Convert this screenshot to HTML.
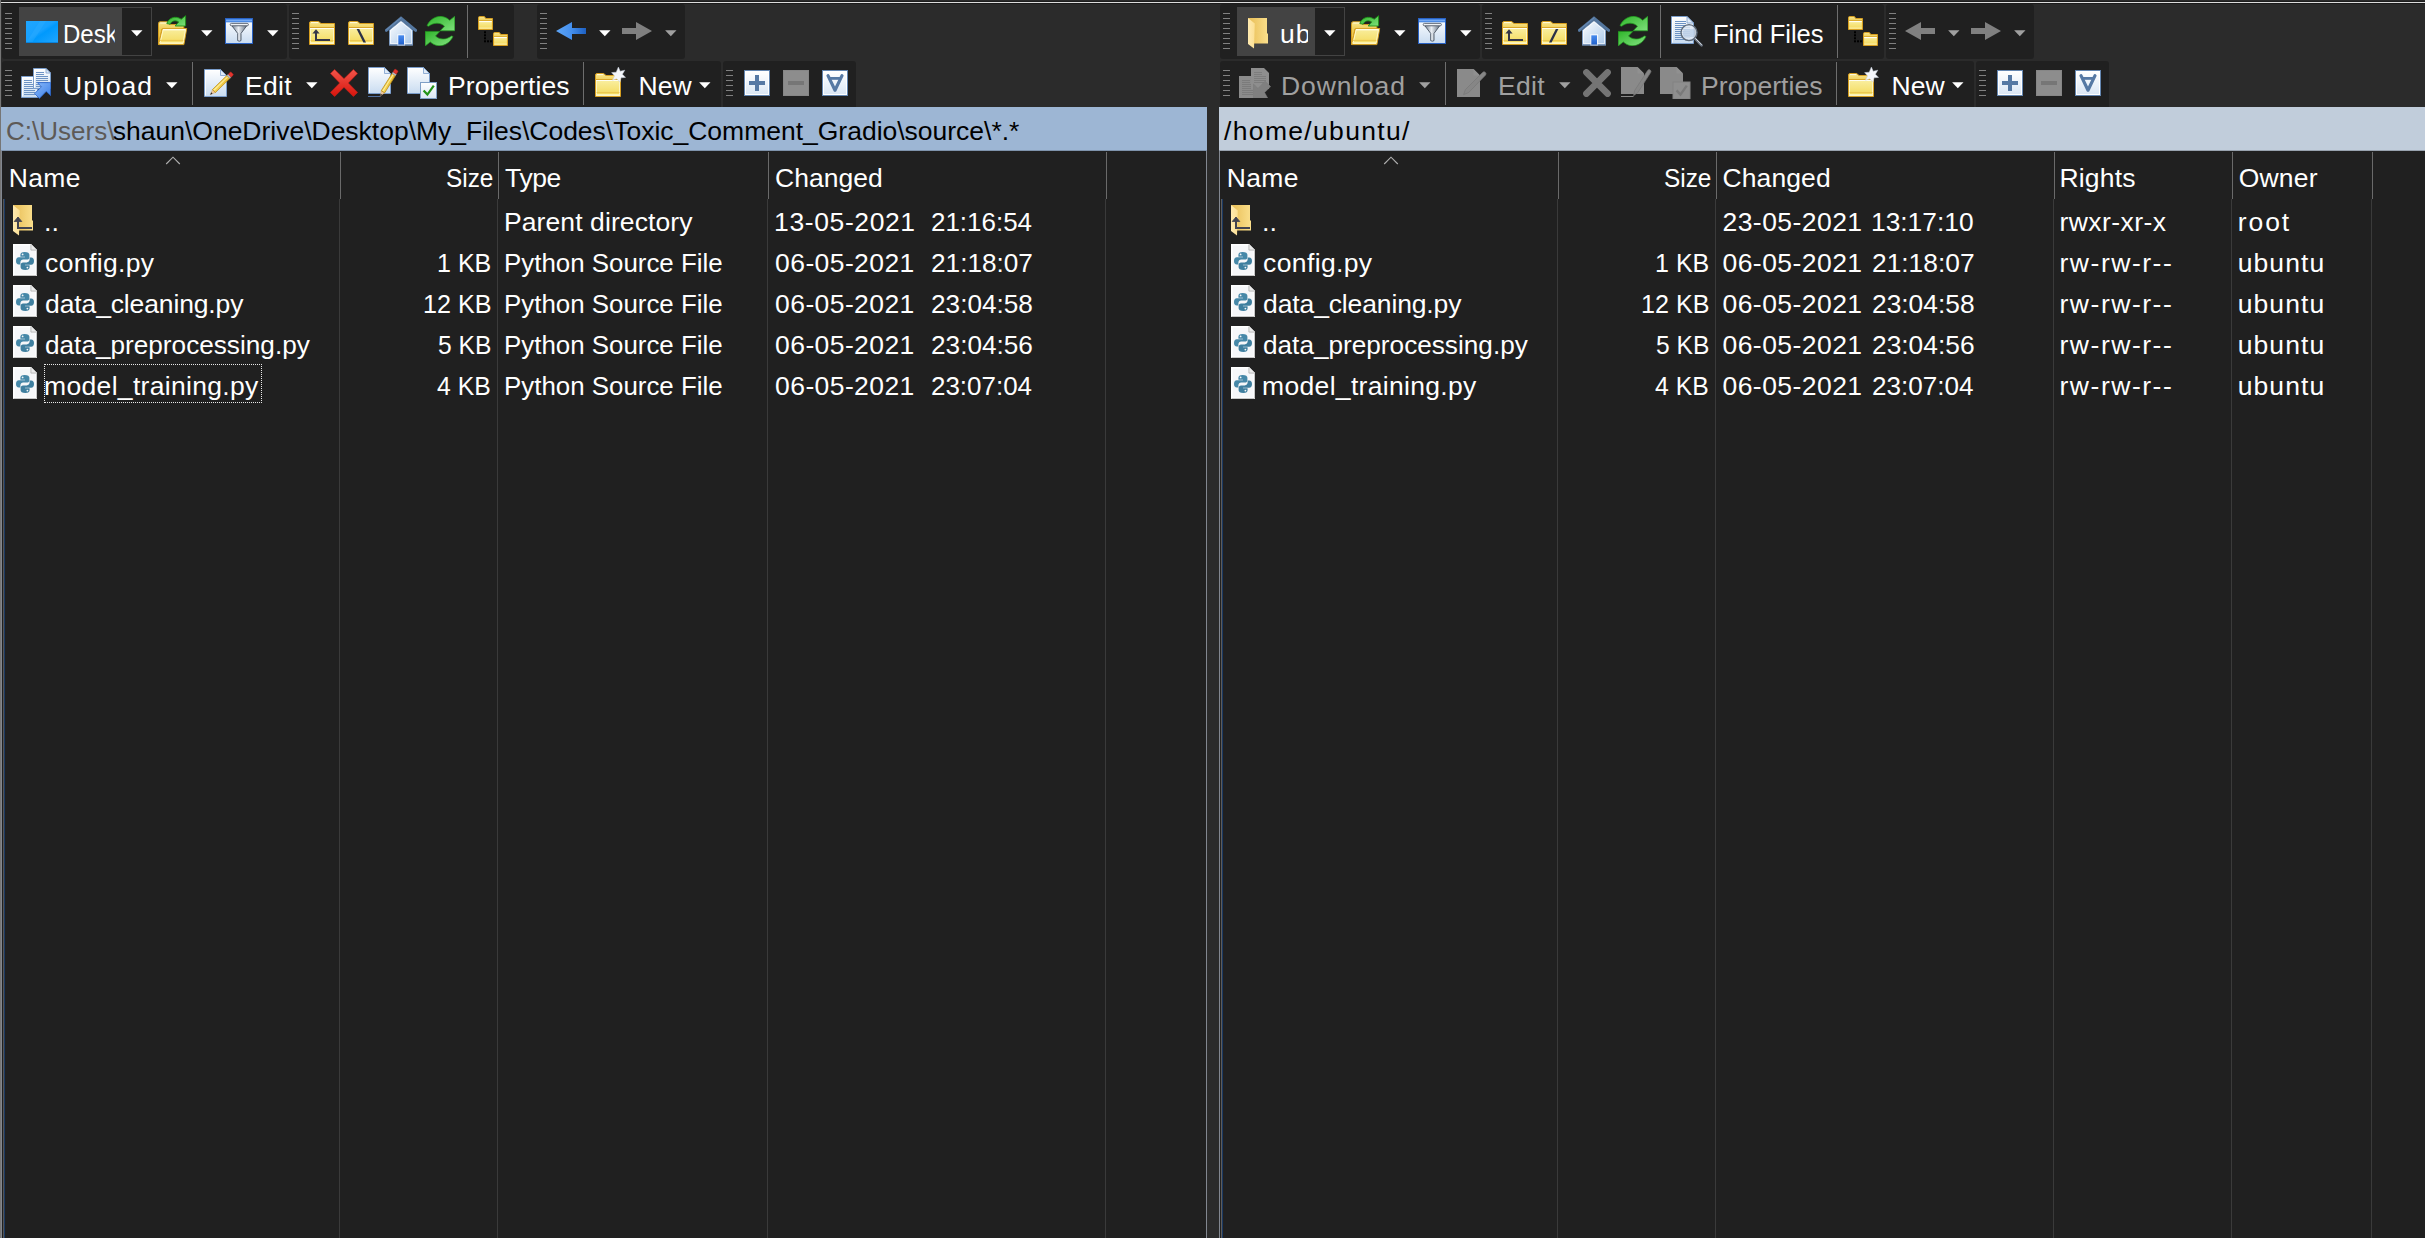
<!DOCTYPE html>
<html><head><meta charset="utf-8"><title>WinSCP</title>
<style>
html,body{margin:0;padding:0;}
body{width:2425px;height:1238px;overflow:hidden;background:#2b2b2b;font-family:"Liberation Sans",sans-serif;}
#r{position:relative;width:2425px;height:1238px;overflow:hidden;}
#r>div,#r>svg,#r>span{position:absolute;display:block;}
.t{white-space:pre;line-height:32px;height:32px;transform-origin:0 50%;}
</style></head>
<body>
<svg width="0" height="0" style="position:absolute"><defs>
<linearGradient id="gFold" x1="0" y1="0" x2="0" y2="1"><stop offset="0" stop-color="#f9ee9f"/><stop offset="1" stop-color="#f4da5a"/></linearGradient>
<linearGradient id="gFoldB" x1="0" y1="0" x2="0" y2="1"><stop offset="0" stop-color="#f8e894"/><stop offset="0.3" stop-color="#f0cf58"/><stop offset="1" stop-color="#ecc040"/></linearGradient>
<linearGradient id="gPage" x1="0" y1="0" x2="0" y2="1"><stop offset="0" stop-color="#ffffff"/><stop offset="1" stop-color="#c9dcf1"/></linearGradient>
<linearGradient id="gDesk" x1="0" y1="0" x2="1" y2="1"><stop offset="0" stop-color="#1fa6ff"/><stop offset="0.45" stop-color="#17a1ff"/><stop offset="0.55" stop-color="#0099fd"/><stop offset="1" stop-color="#22a6ff"/></linearGradient>
<linearGradient id="gVf" x1="0" y1="0" x2="1" y2="0"><stop offset="0" stop-color="#e8bd55"/><stop offset="1" stop-color="#fadf8c"/></linearGradient>
<linearGradient id="gVfF" x1="0" y1="0" x2="1" y2="0"><stop offset="0" stop-color="#ffeab0"/><stop offset="1" stop-color="#fbdf93"/></linearGradient>
<linearGradient id="gGreen" x1="0" y1="0" x2="1" y2="1"><stop offset="0" stop-color="#2fb52a"/><stop offset="1" stop-color="#7fe07c"/></linearGradient>
<linearGradient id="gGreen2" x1="1" y1="1" x2="0" y2="0"><stop offset="0" stop-color="#2fb52a"/><stop offset="1" stop-color="#84e382"/></linearGradient>
<linearGradient id="gBack" x1="0" y1="0" x2="1" y2="0"><stop offset="0" stop-color="#5fa6f7"/><stop offset="0.5" stop-color="#4590ee"/><stop offset="1" stop-color="#1d60c2"/></linearGradient>
<linearGradient id="gFun" x1="0" y1="0" x2="1" y2="0"><stop offset="0" stop-color="#6d7b8c"/><stop offset="0.45" stop-color="#e9eef4"/><stop offset="1" stop-color="#5d6b7c"/></linearGradient>
<linearGradient id="gHome" x1="0" y1="0" x2="1" y2="1"><stop offset="0" stop-color="#ffffff"/><stop offset="1" stop-color="#a9c8ea"/></linearGradient>
<linearGradient id="gDoor" x1="0" y1="0" x2="0" y2="1"><stop offset="0" stop-color="#4a8df0"/><stop offset="1" stop-color="#1f5fc9"/></linearGradient>
<linearGradient id="gRed" x1="0" y1="0" x2="0" y2="1"><stop offset="0" stop-color="#f2554a"/><stop offset="1" stop-color="#d8140c"/></linearGradient>
<linearGradient id="gBtn" x1="0" y1="0" x2="0" y2="1"><stop offset="0" stop-color="#ffffff"/><stop offset="1" stop-color="#dbe7f5"/></linearGradient>
<linearGradient id="gArr" x1="0" y1="0" x2="1" y2="1"><stop offset="0" stop-color="#8ab9fb"/><stop offset="1" stop-color="#3b7fe6"/></linearGradient>
<linearGradient id="gPen" x1="0" y1="0" x2="1" y2="1"><stop offset="0" stop-color="#fbe36a"/><stop offset="1" stop-color="#e9b92c"/></linearGradient>
</defs></svg>
<div id="r">
<div style="left:0px;top:1px;width:2425px;height:1px;background:#1e1e1e;"></div>
<div style="left:0px;top:2px;width:2425px;height:1px;background:#dcdcdc;"></div>
<div style="left:0px;top:3px;width:2425px;height:1px;background:#1b1b1b;"></div>
<div style="left:2px;top:4px;width:285px;height:55px;background:#202020;border-radius:3px;"></div>
<div style="left:289px;top:4px;width:225px;height:55px;background:#202020;border-radius:3px;"></div>
<div style="left:537px;top:4px;width:148px;height:55px;background:#202020;border-radius:3px;"></div>
<div style="left:2px;top:61px;width:719px;height:49px;background:#202020;border-radius:3px;"></div>
<div style="left:723px;top:61px;width:133px;height:49px;background:#202020;border-radius:3px;"></div>
<div style="left:1220px;top:4px;width:260px;height:55px;background:#202020;border-radius:3px;"></div>
<div style="left:1482px;top:4px;width:402px;height:55px;background:#202020;border-radius:3px;"></div>
<div style="left:1886px;top:4px;width:148px;height:55px;background:#202020;border-radius:3px;"></div>
<div style="left:1220px;top:61px;width:754px;height:49px;background:#202020;border-radius:3px;"></div>
<div style="left:1976px;top:61px;width:133px;height:49px;background:#202020;border-radius:3px;"></div>
<div style="left:5px;top:13px;width:7px;height:1px;background:#818181;"></div>
<div style="left:5px;top:18px;width:7px;height:1px;background:#818181;"></div>
<div style="left:5px;top:23px;width:7px;height:1px;background:#818181;"></div>
<div style="left:5px;top:28px;width:7px;height:1px;background:#818181;"></div>
<div style="left:5px;top:33px;width:7px;height:1px;background:#818181;"></div>
<div style="left:5px;top:38px;width:7px;height:1px;background:#818181;"></div>
<div style="left:5px;top:43px;width:7px;height:1px;background:#818181;"></div>
<div style="left:5px;top:48px;width:7px;height:1px;background:#818181;"></div>
<div style="left:19px;top:7px;width:133px;height:49px;background:#434343;"></div>
<div style="left:122px;top:8px;width:29px;height:47px;background:#202020;"></div>
<svg style="left:130.6px;top:30px" width="12" height="7" viewBox="0 0 12 7"><path d="M0.1 0.2 H11.5 L5.8 6.2 Z" fill="#fff"/></svg>
<svg style="left:158px;top:15px" width="30" height="31" viewBox="0 0 30 31"><path d="M0.5 29.5 V8.5 Q0.5 6.8 2 6.8 H9.5 L11.8 9.6 H25.8 V14 H4 Z" fill="url(#gFoldB)" stroke="#d69e20"/><path d="M2.2 8 H8.8" stroke="#fffbe0" stroke-width="1"/><path d="M4.3 13.6 H28.7 L25.9 29.6 H0.6 Z" fill="url(#gFold)" stroke="#d69e20"/><path d="M5.2 14.8 H27.4 L25 28.4 H2 Z" fill="none" stroke="#fff8c8" stroke-width="1"/><path d="M5 14.7 H27.6" stroke="#fffef0" stroke-width="1"/><path d="M1.8 25.4 H25.4" stroke="#ecc850" stroke-width="1"/><path d="M1.6 27.4 H25.1" stroke="#fdf3b4" stroke-width="1"/><path d="M8.8 8.6 C10.6 2.9 17.4 0.2 23.2 4.2 L27.6 0.7 V11 H17.2 L20.7 6.9 C17 4.7 13.2 6.2 12.2 9.2 Z" fill="url(#gGreen)" stroke="#1d9019" stroke-width="0.9" stroke-linejoin="round"/></svg>
<svg style="left:200.8px;top:30px" width="12" height="7" viewBox="0 0 12 7"><path d="M0.1 0.2 H11.5 L5.8 6.2 Z" fill="#fff"/></svg>
<svg style="left:225px;top:18px" width="28" height="26" viewBox="0 0 28 26"><rect x="0.5" y="0.5" width="27" height="25" fill="url(#gPage)" stroke="#2962c4"/><rect x="1" y="1" width="26" height="3" fill="#4d8ce6"/><rect x="1" y="2" width="26" height="1" fill="#76a9f2"/><rect x="1" y="4" width="26" height="1" fill="#b9d0f0"/><path d="M6.6 7.4 H22 L16 15.4 V22.6 Q14.4 23.8 12.7 22.6 V15.4 Z" fill="url(#gFun)" stroke="#4a5563" stroke-width="0.9" stroke-linejoin="round"/><rect x="5.2" y="5.4" width="18.2" height="2.4" rx="1.2" fill="#eef2f7" stroke="#56606e" stroke-width="0.9"/></svg>
<svg style="left:266.8px;top:30px" width="12" height="7" viewBox="0 0 12 7"><path d="M0.1 0.2 H11.5 L5.8 6.2 Z" fill="#fff"/></svg>
<div style="left:292px;top:13px;width:7px;height:1px;background:#818181;"></div>
<div style="left:292px;top:18px;width:7px;height:1px;background:#818181;"></div>
<div style="left:292px;top:23px;width:7px;height:1px;background:#818181;"></div>
<div style="left:292px;top:28px;width:7px;height:1px;background:#818181;"></div>
<div style="left:292px;top:33px;width:7px;height:1px;background:#818181;"></div>
<div style="left:292px;top:38px;width:7px;height:1px;background:#818181;"></div>
<div style="left:292px;top:43px;width:7px;height:1px;background:#818181;"></div>
<div style="left:292px;top:48px;width:7px;height:1px;background:#818181;"></div>
<svg style="left:309px;top:21px" width="26" height="24" viewBox="0 0 26 24"><path d="M0.5 23.5 V2 Q0.5 0.5 2 0.5 H9.6 L12 2.5 H25.5 V23.5 Z" fill="url(#gFoldB)" stroke="#d69e20"/><path d="M2 1.6 H9" stroke="#fffbe0" stroke-width="1"/><rect x="1" y="6" width="24" height="1" fill="#d9a62a"/><rect x="1.5" y="7.5" width="23" height="15" fill="url(#gFold)" stroke="#fdf6c4" stroke-width="1"/><rect x="1" y="7" width="24" height="1" fill="#fffef0"/><path d="M1.6 19.5 H24.4" stroke="#ecc850" stroke-width="1"/><path d="M1.6 21.5 H24.4" stroke="#fdf3b4" stroke-width="1"/><path d="M7 10 V19 H21" fill="none" stroke="#353648" stroke-width="2"/><path d="M3.4 12.6 L7 8.2 L10.6 12.6 Z" fill="#353648"/></svg>
<svg style="left:26px;top:21px" width="32" height="22" viewBox="0 0 32 22"><rect width="32" height="22" fill="url(#gDesk)"/><path d="M0 22 L14 0 H20 L6 22 Z" fill="#35b0ff" opacity="0.35"/><rect y="21" width="32" height="1" fill="#0a84dc"/></svg>
<span class="t" id="t1" style="left:63.10px;top:17.82px;font-size:26.5px;color:#fff;transform:scaleX(0.9074);width:57.20px;overflow:hidden;">Desk</span>
<svg style="left:348px;top:21px" width="26" height="24" viewBox="0 0 26 24"><path d="M0.5 23.5 V2 Q0.5 0.5 2 0.5 H9.6 L12 2.5 H25.5 V23.5 Z" fill="url(#gFoldB)" stroke="#d69e20"/><path d="M2 1.6 H9" stroke="#fffbe0" stroke-width="1"/><rect x="1" y="6" width="24" height="1" fill="#d9a62a"/><rect x="1.5" y="7.5" width="23" height="15" fill="url(#gFold)" stroke="#fdf6c4" stroke-width="1"/><rect x="1" y="7" width="24" height="1" fill="#fffef0"/><path d="M1.6 19.5 H24.4" stroke="#ecc850" stroke-width="1"/><path d="M1.6 21.5 H24.4" stroke="#fdf3b4" stroke-width="1"/><path d="M8.6 8 H11.2 L18 21.4 H15.4 Z" fill="#2b3148"/></svg>
<svg style="left:385px;top:16px" width="32" height="30" viewBox="0 0 32 30"><path d="M4.5 14 L16 4.6 L27.5 14 V28.8 H4.5 Z" fill="url(#gHome)" stroke="#7e9cc2" stroke-width="1"/><path d="M5.5 14.6 L16 6 L26.5 14.6 V27.6 H5.5 Z" fill="none" stroke="#ffffff" stroke-width="0.9" opacity="0.75"/><rect x="12.8" y="18.8" width="6.8" height="10.4" fill="url(#gDoor)" stroke="#ffffff" stroke-width="1"/><path d="M1.3 14.3 L16 2.3 L30.7 14.3" fill="none" stroke="#54779f" stroke-width="3" stroke-linecap="round" stroke-linejoin="miter"/><path d="M1.6 13.6 L16 1.9" fill="none" stroke="#7294bd" stroke-width="1" stroke-linecap="round" opacity="0.8"/><rect x="4" y="28.6" width="24" height="1" fill="#6f8db5"/></svg>
<svg style="left:425px;top:16px" width="30" height="30" viewBox="0 0 30 30"><path d="M2 9.6 C5 3.2 11.6 -0.4 17 0.5 C20 1 22.6 2.3 24.7 4.3 L29.8 0.2 V14.8 H15.2 L19.5 10.2 C15.6 6.2 8.6 6.2 3.6 10.3 Z" fill="url(#gGreen)" stroke="#1f9a1c" stroke-width="0.7" stroke-linejoin="round"/><path d="M2 9.6 C5 3.2 11.6 -0.4 17 0.5 C20 1 22.6 2.3 24.7 4.3 L29.8 0.2 V14.8 H15.2 L19.5 10.2 C15.6 6.2 8.6 6.2 3.6 10.3 Z" transform="rotate(180 15 15.1)" fill="url(#gGreen2)" stroke="#1f9a1c" stroke-width="0.7" stroke-linejoin="round"/></svg>
<div style="left:467px;top:5px;width:1px;height:53px;background:#6e6e6e;"></div>
<svg style="left:478px;top:16px" width="30" height="30" viewBox="0 0 30 30"><g transform="translate(0 0)"><path d="M0.5 13.5 V1.8 Q0.5 0.5 1.8 0.5 H6.3 L7.8 2.5 H14.5 V13.5 Z" fill="url(#gFoldB)" stroke="#d69e20"/><rect x="1" y="4.2" width="13" height="0.9" fill="#d9a62a"/><rect x="1.2" y="5" width="12.6" height="7.8" fill="url(#gFold)"/><rect x="1.2" y="5" width="12.6" height="1.1" fill="#fffef2"/><rect x="1.2" y="11.6" width="12.6" height="1" fill="#fdf3b4"/></g><g transform="translate(15 16)"><path d="M0.5 13.5 V1.8 Q0.5 0.5 1.8 0.5 H6.3 L7.8 2.5 H14.5 V13.5 Z" fill="url(#gFoldB)" stroke="#d69e20"/><rect x="1" y="4.2" width="13" height="0.9" fill="#d9a62a"/><rect x="1.2" y="5" width="12.6" height="7.8" fill="url(#gFold)"/><rect x="1.2" y="5" width="12.6" height="1.1" fill="#fffef2"/><rect x="1.2" y="11.6" width="12.6" height="1" fill="#fdf3b4"/></g><rect x="6" y="15.3" width="2" height="2" fill="#000"/><rect x="6" y="18.3" width="2" height="2" fill="#000"/><rect x="6" y="21.3" width="2" height="2" fill="#000"/><rect x="6" y="24.3" width="2" height="2" fill="#000"/><rect x="9" y="24.3" width="2" height="2" fill="#000"/><rect x="12" y="24.3" width="2" height="2" fill="#000"/></svg>
<div style="left:540px;top:13px;width:7px;height:1px;background:#818181;"></div>
<div style="left:540px;top:18px;width:7px;height:1px;background:#818181;"></div>
<div style="left:540px;top:23px;width:7px;height:1px;background:#818181;"></div>
<div style="left:540px;top:28px;width:7px;height:1px;background:#818181;"></div>
<div style="left:540px;top:33px;width:7px;height:1px;background:#818181;"></div>
<div style="left:540px;top:38px;width:7px;height:1px;background:#818181;"></div>
<div style="left:540px;top:43px;width:7px;height:1px;background:#818181;"></div>
<div style="left:540px;top:48px;width:7px;height:1px;background:#818181;"></div>
<svg style="left:556px;top:22px" width="30" height="18" viewBox="0 0 30 18"><path d="M0 9 L16 0 V6 H30 V12 H16 V18 Z" fill="url(#gBack)"/></svg>
<svg style="left:598.7px;top:30px" width="12" height="7" viewBox="0 0 12 7"><path d="M0.1 0.2 H11.5 L5.8 6.2 Z" fill="#fff"/></svg>
<svg style="left:622px;top:22px" width="30" height="18" viewBox="0 0 30 18"><path d="M30 9 L14 0 V6 H0 V12 H14 V18 Z" fill="#808080"/></svg>
<svg style="left:664.6px;top:30px" width="12" height="7" viewBox="0 0 12 7"><path d="M0.1 0.2 H11.5 L5.8 6.2 Z" fill="#a0a0a0"/></svg>
<div style="left:1223px;top:13px;width:7px;height:1px;background:#818181;"></div>
<div style="left:1223px;top:18px;width:7px;height:1px;background:#818181;"></div>
<div style="left:1223px;top:23px;width:7px;height:1px;background:#818181;"></div>
<div style="left:1223px;top:28px;width:7px;height:1px;background:#818181;"></div>
<div style="left:1223px;top:33px;width:7px;height:1px;background:#818181;"></div>
<div style="left:1223px;top:38px;width:7px;height:1px;background:#818181;"></div>
<div style="left:1223px;top:43px;width:7px;height:1px;background:#818181;"></div>
<div style="left:1223px;top:48px;width:7px;height:1px;background:#818181;"></div>
<div style="left:1237px;top:7px;width:108px;height:49px;background:#434343;"></div>
<div style="left:1315px;top:8px;width:29px;height:47px;background:#202020;"></div>
<svg style="left:1323.6px;top:30px" width="12" height="7" viewBox="0 0 12 7"><path d="M0.1 0.2 H11.5 L5.8 6.2 Z" fill="#fff"/></svg>
<svg style="left:1351px;top:15px" width="30" height="31" viewBox="0 0 30 31"><path d="M0.5 29.5 V8.5 Q0.5 6.8 2 6.8 H9.5 L11.8 9.6 H25.8 V14 H4 Z" fill="url(#gFoldB)" stroke="#d69e20"/><path d="M2.2 8 H8.8" stroke="#fffbe0" stroke-width="1"/><path d="M4.3 13.6 H28.7 L25.9 29.6 H0.6 Z" fill="url(#gFold)" stroke="#d69e20"/><path d="M5.2 14.8 H27.4 L25 28.4 H2 Z" fill="none" stroke="#fff8c8" stroke-width="1"/><path d="M5 14.7 H27.6" stroke="#fffef0" stroke-width="1"/><path d="M1.8 25.4 H25.4" stroke="#ecc850" stroke-width="1"/><path d="M1.6 27.4 H25.1" stroke="#fdf3b4" stroke-width="1"/><path d="M8.8 8.6 C10.6 2.9 17.4 0.2 23.2 4.2 L27.6 0.7 V11 H17.2 L20.7 6.9 C17 4.7 13.2 6.2 12.2 9.2 Z" fill="url(#gGreen)" stroke="#1d9019" stroke-width="0.9" stroke-linejoin="round"/></svg>
<svg style="left:1393.8px;top:30px" width="12" height="7" viewBox="0 0 12 7"><path d="M0.1 0.2 H11.5 L5.8 6.2 Z" fill="#fff"/></svg>
<svg style="left:1418px;top:18px" width="28" height="26" viewBox="0 0 28 26"><rect x="0.5" y="0.5" width="27" height="25" fill="url(#gPage)" stroke="#2962c4"/><rect x="1" y="1" width="26" height="3" fill="#4d8ce6"/><rect x="1" y="2" width="26" height="1" fill="#76a9f2"/><rect x="1" y="4" width="26" height="1" fill="#b9d0f0"/><path d="M6.6 7.4 H22 L16 15.4 V22.6 Q14.4 23.8 12.7 22.6 V15.4 Z" fill="url(#gFun)" stroke="#4a5563" stroke-width="0.9" stroke-linejoin="round"/><rect x="5.2" y="5.4" width="18.2" height="2.4" rx="1.2" fill="#eef2f7" stroke="#56606e" stroke-width="0.9"/></svg>
<svg style="left:1459.8px;top:30px" width="12" height="7" viewBox="0 0 12 7"><path d="M0.1 0.2 H11.5 L5.8 6.2 Z" fill="#fff"/></svg>
<div style="left:1485px;top:13px;width:7px;height:1px;background:#818181;"></div>
<div style="left:1485px;top:18px;width:7px;height:1px;background:#818181;"></div>
<div style="left:1485px;top:23px;width:7px;height:1px;background:#818181;"></div>
<div style="left:1485px;top:28px;width:7px;height:1px;background:#818181;"></div>
<div style="left:1485px;top:33px;width:7px;height:1px;background:#818181;"></div>
<div style="left:1485px;top:38px;width:7px;height:1px;background:#818181;"></div>
<div style="left:1485px;top:43px;width:7px;height:1px;background:#818181;"></div>
<div style="left:1485px;top:48px;width:7px;height:1px;background:#818181;"></div>
<svg style="left:1502px;top:21px" width="26" height="24" viewBox="0 0 26 24"><path d="M0.5 23.5 V2 Q0.5 0.5 2 0.5 H9.6 L12 2.5 H25.5 V23.5 Z" fill="url(#gFoldB)" stroke="#d69e20"/><path d="M2 1.6 H9" stroke="#fffbe0" stroke-width="1"/><rect x="1" y="6" width="24" height="1" fill="#d9a62a"/><rect x="1.5" y="7.5" width="23" height="15" fill="url(#gFold)" stroke="#fdf6c4" stroke-width="1"/><rect x="1" y="7" width="24" height="1" fill="#fffef0"/><path d="M1.6 19.5 H24.4" stroke="#ecc850" stroke-width="1"/><path d="M1.6 21.5 H24.4" stroke="#fdf3b4" stroke-width="1"/><path d="M7 10 V19 H21" fill="none" stroke="#353648" stroke-width="2"/><path d="M3.4 12.6 L7 8.2 L10.6 12.6 Z" fill="#353648"/></svg>
<svg style="left:1248px;top:17.5px" width="20" height="31" viewBox="0 0 20 31"><path d="M0 0 H19 V15 L20 16 V25.5 H5 Z" fill="url(#gVf)"/><path d="M0 0 L6.8 5.6 L6 30.5 L0 26 Z" fill="url(#gVfF)"/></svg>
<span class="t" id="t2" style="left:1280.10px;top:17.82px;font-size:26.5px;color:#fff;letter-spacing:0.923px;width:27.90px;overflow:hidden;">ubuntu</span>
<svg style="left:1541px;top:21px" width="26" height="24" viewBox="0 0 26 24"><path d="M0.5 23.5 V2 Q0.5 0.5 2 0.5 H9.6 L12 2.5 H25.5 V23.5 Z" fill="url(#gFoldB)" stroke="#d69e20"/><path d="M2 1.6 H9" stroke="#fffbe0" stroke-width="1"/><rect x="1" y="6" width="24" height="1" fill="#d9a62a"/><rect x="1.5" y="7.5" width="23" height="15" fill="url(#gFold)" stroke="#fdf6c4" stroke-width="1"/><rect x="1" y="7" width="24" height="1" fill="#fffef0"/><path d="M1.6 19.5 H24.4" stroke="#ecc850" stroke-width="1"/><path d="M1.6 21.5 H24.4" stroke="#fdf3b4" stroke-width="1"/><path d="M17.4 8 H14.8 L8 21.4 H10.6 Z" fill="#2b3148"/></svg>
<svg style="left:1578px;top:16px" width="32" height="30" viewBox="0 0 32 30"><path d="M4.5 14 L16 4.6 L27.5 14 V28.8 H4.5 Z" fill="url(#gHome)" stroke="#7e9cc2" stroke-width="1"/><path d="M5.5 14.6 L16 6 L26.5 14.6 V27.6 H5.5 Z" fill="none" stroke="#ffffff" stroke-width="0.9" opacity="0.75"/><rect x="12.8" y="18.8" width="6.8" height="10.4" fill="url(#gDoor)" stroke="#ffffff" stroke-width="1"/><path d="M1.3 14.3 L16 2.3 L30.7 14.3" fill="none" stroke="#54779f" stroke-width="3" stroke-linecap="round" stroke-linejoin="miter"/><path d="M1.6 13.6 L16 1.9" fill="none" stroke="#7294bd" stroke-width="1" stroke-linecap="round" opacity="0.8"/><rect x="4" y="28.6" width="24" height="1" fill="#6f8db5"/></svg>
<svg style="left:1618px;top:16px" width="30" height="30" viewBox="0 0 30 30"><path d="M2 9.6 C5 3.2 11.6 -0.4 17 0.5 C20 1 22.6 2.3 24.7 4.3 L29.8 0.2 V14.8 H15.2 L19.5 10.2 C15.6 6.2 8.6 6.2 3.6 10.3 Z" fill="url(#gGreen)" stroke="#1f9a1c" stroke-width="0.7" stroke-linejoin="round"/><path d="M2 9.6 C5 3.2 11.6 -0.4 17 0.5 C20 1 22.6 2.3 24.7 4.3 L29.8 0.2 V14.8 H15.2 L19.5 10.2 C15.6 6.2 8.6 6.2 3.6 10.3 Z" transform="rotate(180 15 15.1)" fill="url(#gGreen2)" stroke="#1f9a1c" stroke-width="0.7" stroke-linejoin="round"/></svg>
<div style="left:1660px;top:5px;width:1px;height:53px;background:#6e6e6e;"></div>
<svg style="left:1671px;top:15px" width="32" height="32" viewBox="0 0 32 32"><path d="M0.5 1.5 H16 L22.5 8 V28.5 H0.5 Z" fill="url(#gPage)" stroke="#7a9dcb" stroke-width="1"/><path d="M1.5 27.5 V2.5 H15.5" fill="none" stroke="#ffffff" stroke-width="1" opacity="0.9"/><path d="M16 1.5 V8 H22.5 Z" fill="#dfeaf6" stroke="#7a9dcb" stroke-width="0.8"/><rect x="4" y="6" width="11" height="1" fill="#6d93c4"/><rect x="4" y="8" width="11" height="1" fill="#6d93c4"/><rect x="4" y="10" width="15" height="1" fill="#6d93c4"/><rect x="4" y="12" width="15" height="1" fill="#6d93c4"/><rect x="4" y="14" width="15" height="1" fill="#6d93c4"/><rect x="4" y="16" width="15" height="1" fill="#6d93c4"/><rect x="4" y="18" width="15" height="1" fill="#6d93c4"/><rect x="4" y="20" width="15" height="1" fill="#6d93c4"/><rect x="4" y="22" width="15" height="1" fill="#6d93c4"/><rect x="4" y="24" width="15" height="1" fill="#6d93c4"/><circle cx="18" cy="17.6" r="8" fill="#dfe9f5" fill-opacity="0.85" stroke="#5f6b7a" stroke-width="1.4"/><path d="M12.5 15 H23.5 M12 17 H24 M12 19 H24 M12.8 21 H23" stroke="#aac2e0" stroke-width="1"/><path d="M24 23.6 L30.6 30.4" stroke="#6a7380" stroke-width="2.6" stroke-linecap="round"/><path d="M24.6 23.6 L30.4 29.6" stroke="#e8edf3" stroke-width="0.9" stroke-linecap="round"/></svg>
<span class="t" id="t3" style="left:1713.10px;top:17.82px;font-size:26.5px;color:#fff;transform:scaleX(0.9621);">Find Files</span>
<div style="left:1837px;top:5px;width:1px;height:53px;background:#6e6e6e;"></div>
<svg style="left:1848px;top:16px" width="30" height="30" viewBox="0 0 30 30"><g transform="translate(0 0)"><path d="M0.5 13.5 V1.8 Q0.5 0.5 1.8 0.5 H6.3 L7.8 2.5 H14.5 V13.5 Z" fill="url(#gFoldB)" stroke="#d69e20"/><rect x="1" y="4.2" width="13" height="0.9" fill="#d9a62a"/><rect x="1.2" y="5" width="12.6" height="7.8" fill="url(#gFold)"/><rect x="1.2" y="5" width="12.6" height="1.1" fill="#fffef2"/><rect x="1.2" y="11.6" width="12.6" height="1" fill="#fdf3b4"/></g><g transform="translate(15 16)"><path d="M0.5 13.5 V1.8 Q0.5 0.5 1.8 0.5 H6.3 L7.8 2.5 H14.5 V13.5 Z" fill="url(#gFoldB)" stroke="#d69e20"/><rect x="1" y="4.2" width="13" height="0.9" fill="#d9a62a"/><rect x="1.2" y="5" width="12.6" height="7.8" fill="url(#gFold)"/><rect x="1.2" y="5" width="12.6" height="1.1" fill="#fffef2"/><rect x="1.2" y="11.6" width="12.6" height="1" fill="#fdf3b4"/></g><rect x="6" y="15.3" width="2" height="2" fill="#000"/><rect x="6" y="18.3" width="2" height="2" fill="#000"/><rect x="6" y="21.3" width="2" height="2" fill="#000"/><rect x="6" y="24.3" width="2" height="2" fill="#000"/><rect x="9" y="24.3" width="2" height="2" fill="#000"/><rect x="12" y="24.3" width="2" height="2" fill="#000"/></svg>
<div style="left:1889px;top:13px;width:7px;height:1px;background:#818181;"></div>
<div style="left:1889px;top:18px;width:7px;height:1px;background:#818181;"></div>
<div style="left:1889px;top:23px;width:7px;height:1px;background:#818181;"></div>
<div style="left:1889px;top:28px;width:7px;height:1px;background:#818181;"></div>
<div style="left:1889px;top:33px;width:7px;height:1px;background:#818181;"></div>
<div style="left:1889px;top:38px;width:7px;height:1px;background:#818181;"></div>
<div style="left:1889px;top:43px;width:7px;height:1px;background:#818181;"></div>
<div style="left:1889px;top:48px;width:7px;height:1px;background:#818181;"></div>
<svg style="left:1905px;top:22px" width="30" height="18" viewBox="0 0 30 18"><path d="M0 9 L16 0 V6 H30 V12 H16 V18 Z" fill="#808080"/></svg>
<svg style="left:1947.7px;top:30px" width="12" height="7" viewBox="0 0 12 7"><path d="M0.1 0.2 H11.5 L5.8 6.2 Z" fill="#a0a0a0"/></svg>
<svg style="left:1971px;top:22px" width="30" height="18" viewBox="0 0 30 18"><path d="M30 9 L14 0 V6 H0 V12 H14 V18 Z" fill="#808080"/></svg>
<svg style="left:2013.6px;top:30px" width="12" height="7" viewBox="0 0 12 7"><path d="M0.1 0.2 H11.5 L5.8 6.2 Z" fill="#a0a0a0"/></svg>
<div style="left:5px;top:70px;width:7px;height:1px;background:#818181;"></div>
<div style="left:5px;top:75px;width:7px;height:1px;background:#818181;"></div>
<div style="left:5px;top:80px;width:7px;height:1px;background:#818181;"></div>
<div style="left:5px;top:85px;width:7px;height:1px;background:#818181;"></div>
<div style="left:5px;top:90px;width:7px;height:1px;background:#818181;"></div>
<div style="left:5px;top:95px;width:7px;height:1px;background:#818181;"></div>
<svg style="left:21px;top:68px" width="30" height="31" viewBox="0 0 30 31"><path d="M0.5 8.5 H16.99 L16.5 8.01 V29.5 H0.5 Z" fill="url(#gPage)" stroke="#7a9dcb" stroke-width="1"/><path d="M1.5 28.5 V9.5 H16.49" fill="none" stroke="#ffffff" stroke-width="1" opacity="0.9"/><path d="M16.99 8.5 V8.01 H16.5 Z" fill="#dfeaf6" stroke="#7a9dcb" stroke-width="0.8"/><rect x="3" y="12" width="8" height="1" fill="#6d93c4"/><rect x="3" y="14" width="8" height="1" fill="#6d93c4"/><rect x="3" y="16" width="11" height="1" fill="#6d93c4"/><rect x="3" y="18" width="11" height="1" fill="#6d93c4"/><rect x="3" y="20" width="11" height="1" fill="#6d93c4"/><rect x="3" y="22" width="11" height="1" fill="#6d93c4"/><rect x="3" y="24" width="11" height="1" fill="#6d93c4"/><rect x="3" y="26" width="11" height="1" fill="#6d93c4"/><path d="M12.5 0.5 H25 L29.5 5 V20.5 H12.5 Z" fill="url(#gPage)" stroke="#7a9dcb" stroke-width="1"/><path d="M13.5 19.5 V1.5 H24.5" fill="none" stroke="#ffffff" stroke-width="1" opacity="0.9"/><path d="M25 0.5 V5 H29.5 Z" fill="#dfeaf6" stroke="#7a9dcb" stroke-width="0.8"/><rect x="15" y="4" width="8" height="1" fill="#6d93c4"/><rect x="15" y="6" width="8" height="1" fill="#6d93c4"/><rect x="15" y="8" width="12" height="1" fill="#6d93c4"/><rect x="15" y="10" width="12" height="1" fill="#6d93c4"/><rect x="15" y="12" width="12" height="1" fill="#6d93c4"/><rect x="15" y="14" width="12" height="1" fill="#6d93c4"/><rect x="15" y="16" width="12" height="1" fill="#6d93c4"/><rect x="15" y="18" width="12" height="1" fill="#6d93c4"/><path d="M29.6 14.6 V27.6 L25.2 23.4 L18.4 30.4 L13.6 25.6 L20.4 18.8 L16.4 14.6 Z" fill="url(#gArr)" stroke="#2a63c8" stroke-width="0.8" stroke-linejoin="round"/></svg>
<span class="t" id="t4" style="left:63.10px;top:69.82px;font-size:26.5px;color:#fff;letter-spacing:0.976px;">Upload</span>
<svg style="left:165.8px;top:82px" width="12" height="7" viewBox="0 0 12 7"><path d="M0.1 0.2 H11.5 L5.8 6.2 Z" fill="#fff"/></svg>
<div style="left:192px;top:62px;width:1px;height:43px;background:#6e6e6e;"></div>
<svg style="left:204px;top:69px" width="30" height="28" viewBox="0 0 30 28"><path d="M0.5 0.5 H16.5 L22.5 6.5 V27.5 H0.5 Z" fill="url(#gPage)" stroke="#7a9dcb" stroke-width="1"/><path d="M1.5 26.5 V1.5 H16.0" fill="none" stroke="#ffffff" stroke-width="1" opacity="0.9"/><path d="M16.5 0.5 V6.5 H22.5 Z" fill="#dfeaf6" stroke="#7a9dcb" stroke-width="0.8"/><g transform="translate(6.2 25.7) rotate(-44.34)"><path d="M0 0 L5.4 -2.1 V2.1 Z" fill="#efc89a" stroke="#c9a070" stroke-width="0.4"/><path d="M0 0 L2.4 -0.95 V0.95 Z" fill="#2a2a2a"/><rect x="5.2" y="-2.1" width="20.36" height="4.2" fill="url(#gPen)" stroke="#b98a14" stroke-width="0.7"/><rect x="6" y="-0.95" width="18.76" height="0.9" fill="#fff7b8" opacity="0.85"/><rect x="25.36" y="-2.1" width="2" height="4.2" fill="#b4bcc6" stroke="#8a929c" stroke-width="0.3"/><rect x="27.16" y="-2.1" width="3.6" height="4.2" rx="0.8" fill="#e2352e" stroke="#c02620" stroke-width="0.4"/></g></svg>
<span class="t" id="t5" style="left:245.10px;top:69.82px;font-size:26.5px;color:#fff;letter-spacing:0.282px;">Edit</span>
<svg style="left:305.9px;top:82px" width="12" height="7" viewBox="0 0 12 7"><path d="M0.1 0.2 H11.5 L5.8 6.2 Z" fill="#fff"/></svg>
<svg style="left:330px;top:69px" width="28" height="28" viewBox="0 0 28 28"><path d="M4.6 0.5 L14 9.7 L23.4 0.5 L27.5 4.6 L18.3 14 L27.5 23.4 L23.4 27.5 L14 18.3 L4.6 27.5 L0.5 23.4 L9.7 14 L0.5 4.6 Z" fill="url(#gRed)" stroke="#c8211a" stroke-width="0.7" stroke-linejoin="round"/></svg>
<svg style="left:368px;top:67px" width="31" height="31" viewBox="0 0 31 31"><path d="M0.5 0.5 H16.5 L22.5 6.5 V26.5 H0.5 Z" fill="url(#gPage)" stroke="#7a9dcb" stroke-width="1"/><path d="M1.5 25.5 V1.5 H16.0" fill="none" stroke="#ffffff" stroke-width="1" opacity="0.9"/><path d="M16.5 0.5 V6.5 H22.5 Z" fill="#dfeaf6" stroke="#7a9dcb" stroke-width="0.8"/><rect x="0" y="29" width="12.5" height="1" fill="#4f6fa0"/><g transform="translate(12.2 29.2) rotate(-57.96)"><path d="M0 0 L5.4 -2.0 V2.0 Z" fill="#efc89a" stroke="#c9a070" stroke-width="0.4"/><path d="M0 0 L2.4 -0.90 V0.90 Z" fill="#2a2a2a"/><rect x="5.2" y="-2.0" width="20.51" height="4.0" fill="url(#gPen)" stroke="#b98a14" stroke-width="0.7"/><rect x="6" y="-0.90" width="18.91" height="0.9" fill="#fff7b8" opacity="0.85"/><rect x="25.51" y="-2.0" width="2" height="4.0" fill="#b4bcc6" stroke="#8a929c" stroke-width="0.3"/><rect x="27.31" y="-2.0" width="3.6" height="4.0" rx="0.8" fill="#e2352e" stroke="#c02620" stroke-width="0.4"/></g></svg>
<svg style="left:407px;top:67px" width="31" height="32" viewBox="0 0 31 32"><path d="M0.5 0.5 H16.5 L22.5 6.5 V26.5 H0.5 Z" fill="url(#gPage)" stroke="#7a9dcb" stroke-width="1"/><path d="M1.5 25.5 V1.5 H16.0" fill="none" stroke="#ffffff" stroke-width="1" opacity="0.9"/><path d="M16.5 0.5 V6.5 H22.5 Z" fill="#dfeaf6" stroke="#7a9dcb" stroke-width="0.8"/><rect x="13.5" y="15.5" width="16" height="16" fill="url(#gBtn)" stroke="#7f9fc6"/><path d="M16.6 23.4 L20.4 27.6 L26.8 18.6" fill="none" stroke="#239318" stroke-width="2.2"/></svg>
<span class="t" id="t6" style="left:448.10px;top:69.82px;font-size:26.5px;color:#fff;letter-spacing:0.082px;">Properties</span>
<div style="left:583px;top:62px;width:1px;height:43px;background:#6e6e6e;"></div>
<svg style="left:595px;top:67px" width="31" height="31" viewBox="0 0 31 31"><g transform="translate(0 6)"><path d="M0.5 23.5 V2 Q0.5 0.5 2 0.5 H8.6 L11 2.5 H25.5 V23.5 Z" fill="url(#gFoldB)" stroke="#d69e20"/><path d="M2 1.6 H8" stroke="#fffbe0" stroke-width="1"/><rect x="1" y="6" width="24" height="1" fill="#d9a62a"/><rect x="1.5" y="7.5" width="23" height="15" fill="url(#gFold)" stroke="#fdf6c4" stroke-width="1"/><rect x="1" y="7" width="24" height="1" fill="#fffef0"/><path d="M1.6 19.5 H24.4" stroke="#ecc850" stroke-width="1"/><path d="M1.6 21.5 H24.4" stroke="#fdf3b4" stroke-width="1"/></g><path d="M23.4 0 L25.2 4.2 L29.8 3.2 L27.4 7.2 L30.6 10.4 L26 10.8 L25 15.2 L21.8 11.8 L17.4 13.2 L19.6 9 L16.6 5.6 L21.2 5.2 Z" fill="#f4f6fa" stroke="#c5ccd8" stroke-width="0.5"/></svg>
<span class="t" id="t7" style="left:638.50px;top:69.82px;font-size:26.5px;color:#fff;letter-spacing:0.085px;">New</span>
<svg style="left:698.8px;top:82px" width="12" height="7" viewBox="0 0 12 7"><path d="M0.1 0.2 H11.5 L5.8 6.2 Z" fill="#fff"/></svg>
<div style="left:726px;top:70px;width:7px;height:1px;background:#818181;"></div>
<div style="left:726px;top:75px;width:7px;height:1px;background:#818181;"></div>
<div style="left:726px;top:80px;width:7px;height:1px;background:#818181;"></div>
<div style="left:726px;top:85px;width:7px;height:1px;background:#818181;"></div>
<div style="left:726px;top:90px;width:7px;height:1px;background:#818181;"></div>
<div style="left:726px;top:95px;width:7px;height:1px;background:#818181;"></div>
<svg style="left:744px;top:70px" width="26" height="26" viewBox="0 0 26 26"><rect x="0.5" y="0.5" width="25" height="25" fill="#ffffff" stroke="#6486b0"/><rect x="2" y="2" width="22" height="22" fill="url(#gBtn)"/><path d="M13 5 V21 M5 13 H21" stroke="#5679a4" stroke-width="4"/></svg>
<svg style="left:783px;top:70px" width="26" height="26" viewBox="0 0 26 26"><rect width="26" height="26" fill="#8d8d8d"/><rect x="0.5" y="0.5" width="25" height="25" fill="none" stroke="#868686"/><path d="M5 13 H21" stroke="#767676" stroke-width="4"/></svg>
<svg style="left:822px;top:70px" width="26" height="26" viewBox="0 0 26 26"><rect x="0.5" y="0.5" width="25" height="25" fill="#ffffff" stroke="#6486b0"/><rect x="2" y="2" width="22" height="22" fill="url(#gBtn)"/><path d="M6 5.6 L13 20.2 L20 5.6" fill="none" stroke="#5679a4" stroke-width="3.2" stroke-linecap="round" stroke-linejoin="round"/><path d="M7.6 8.4 H18.4" stroke="#5679a4" stroke-width="2.8"/></svg>
<div style="left:1223px;top:70px;width:7px;height:1px;background:#818181;"></div>
<div style="left:1223px;top:75px;width:7px;height:1px;background:#818181;"></div>
<div style="left:1223px;top:80px;width:7px;height:1px;background:#818181;"></div>
<div style="left:1223px;top:85px;width:7px;height:1px;background:#818181;"></div>
<div style="left:1223px;top:90px;width:7px;height:1px;background:#818181;"></div>
<div style="left:1223px;top:95px;width:7px;height:1px;background:#818181;"></div>
<svg style="left:1239px;top:68px" width="32" height="30" viewBox="0 0 32 30"><rect x="0" y="8" width="17" height="22" fill="#8b8b8b"/><rect x="3" y="12" width="8" height="1" fill="#7b7b7b"/><rect x="3" y="14" width="8" height="1" fill="#7b7b7b"/><rect x="3" y="16" width="11" height="1" fill="#7b7b7b"/><rect x="3" y="18" width="11" height="1" fill="#7b7b7b"/><rect x="3" y="20" width="11" height="1" fill="#7b7b7b"/><rect x="3" y="22" width="11" height="1" fill="#7b7b7b"/><rect x="3" y="24" width="11" height="1" fill="#7b7b7b"/><rect x="3" y="26" width="11" height="1" fill="#7b7b7b"/><path d="M12 0 H25 L30 5 V21 H12 Z" fill="#8e8e8e"/><rect x="15" y="4" width="8" height="1" fill="#7d7d7d"/><rect x="15" y="6" width="8" height="1" fill="#7d7d7d"/><rect x="15" y="8" width="12" height="1" fill="#7d7d7d"/><rect x="15" y="10" width="12" height="1" fill="#7d7d7d"/><rect x="15" y="12" width="12" height="1" fill="#7d7d7d"/><rect x="15" y="14" width="12" height="1" fill="#7d7d7d"/><path d="M14.5 16 L19 20.4 L26 13.2 L31.6 18.6 L25.6 24.6 L28.6 30 H14.5 Z" fill="#808080" stroke="#7a7a7a" stroke-width="0.6"/></svg>
<span class="t" id="t8" style="left:1281.10px;top:69.82px;font-size:26.5px;color:#a0a0a0;letter-spacing:0.854px;">Download</span>
<svg style="left:1418.8px;top:82px" width="12" height="7" viewBox="0 0 12 7"><path d="M0.1 0.2 H11.5 L5.8 6.2 Z" fill="#a0a0a0"/></svg>
<div style="left:1445px;top:62px;width:1px;height:43px;background:#6e6e6e;"></div>
<svg style="left:1457px;top:69px" width="30" height="28" viewBox="0 0 30 28"><path d="M0 0 H16.5 L23 6.5 V28 H0 Z" fill="#8a8a8a"/><path d="M16.5 0 V6.5 H23 Z" fill="#909090"/><path d="M6.6 25.6 L8.4 20.6 L25.6 3.4 Q27 2 28.4 3.4 Q29.8 4.8 28.4 6.2 L11.6 23.6 Z" fill="#868686" stroke="#777777" stroke-width="0.7"/></svg>
<span class="t" id="t9" style="left:1498.10px;top:69.82px;font-size:26.5px;color:#a0a0a0;letter-spacing:0.282px;">Edit</span>
<svg style="left:1558.9px;top:82px" width="12" height="7" viewBox="0 0 12 7"><path d="M0.1 0.2 H11.5 L5.8 6.2 Z" fill="#a0a0a0"/></svg>
<svg style="left:1583px;top:69px" width="28" height="28" viewBox="0 0 28 28"><path d="M3.4 3.4 L24.6 24.6 M24.6 3.4 L3.4 24.6" fill="none" stroke="#747474" stroke-width="6.6" stroke-linecap="round"/></svg>
<svg style="left:1621px;top:67px" width="31" height="31" viewBox="0 0 31 31"><path d="M0 0 H16.5 L23 6.5 V27 H0 Z" fill="#8a8a8a"/><path d="M16.5 0 V6.5 H23 Z" fill="#909090"/><rect x="0" y="29" width="12.5" height="1" fill="#8a8a8a"/><path d="M12.6 28.6 L13.6 23.6 L26.6 3.6 Q27.8 2 29.2 3 Q30.6 4 29.6 5.6 L16.8 25.6 Z" fill="#868686" stroke="#777777" stroke-width="0.7"/></svg>
<svg style="left:1660px;top:67px" width="31" height="32" viewBox="0 0 31 32"><path d="M0 0 H16.5 L23 6.5 V27 H0 Z" fill="#8a8a8a"/><path d="M16.5 0 V6.5 H23 Z" fill="#909090"/><rect x="13" y="15" width="17" height="17" fill="#8e8e8e" stroke="#828282" stroke-width="1"/><path d="M16.6 23.4 L20.4 27.6 L26.8 18.6" fill="none" stroke="#7a7a7a" stroke-width="2.4"/></svg>
<span class="t" id="t10" style="left:1701.10px;top:69.82px;font-size:26.5px;color:#a0a0a0;letter-spacing:0.082px;">Properties</span>
<div style="left:1836px;top:62px;width:1px;height:43px;background:#6e6e6e;"></div>
<svg style="left:1848px;top:67px" width="31" height="31" viewBox="0 0 31 31"><g transform="translate(0 6)"><path d="M0.5 23.5 V2 Q0.5 0.5 2 0.5 H8.6 L11 2.5 H25.5 V23.5 Z" fill="url(#gFoldB)" stroke="#d69e20"/><path d="M2 1.6 H8" stroke="#fffbe0" stroke-width="1"/><rect x="1" y="6" width="24" height="1" fill="#d9a62a"/><rect x="1.5" y="7.5" width="23" height="15" fill="url(#gFold)" stroke="#fdf6c4" stroke-width="1"/><rect x="1" y="7" width="24" height="1" fill="#fffef0"/><path d="M1.6 19.5 H24.4" stroke="#ecc850" stroke-width="1"/><path d="M1.6 21.5 H24.4" stroke="#fdf3b4" stroke-width="1"/></g><path d="M23.4 0 L25.2 4.2 L29.8 3.2 L27.4 7.2 L30.6 10.4 L26 10.8 L25 15.2 L21.8 11.8 L17.4 13.2 L19.6 9 L16.6 5.6 L21.2 5.2 Z" fill="#f4f6fa" stroke="#c5ccd8" stroke-width="0.5"/></svg>
<span class="t" id="t11" style="left:1891.50px;top:69.82px;font-size:26.5px;color:#fff;letter-spacing:0.085px;">New</span>
<svg style="left:1951.8px;top:82px" width="12" height="7" viewBox="0 0 12 7"><path d="M0.1 0.2 H11.5 L5.8 6.2 Z" fill="#fff"/></svg>
<div style="left:1979px;top:70px;width:7px;height:1px;background:#818181;"></div>
<div style="left:1979px;top:75px;width:7px;height:1px;background:#818181;"></div>
<div style="left:1979px;top:80px;width:7px;height:1px;background:#818181;"></div>
<div style="left:1979px;top:85px;width:7px;height:1px;background:#818181;"></div>
<div style="left:1979px;top:90px;width:7px;height:1px;background:#818181;"></div>
<div style="left:1979px;top:95px;width:7px;height:1px;background:#818181;"></div>
<svg style="left:1997px;top:70px" width="26" height="26" viewBox="0 0 26 26"><rect x="0.5" y="0.5" width="25" height="25" fill="#ffffff" stroke="#6486b0"/><rect x="2" y="2" width="22" height="22" fill="url(#gBtn)"/><path d="M13 5 V21 M5 13 H21" stroke="#5679a4" stroke-width="4"/></svg>
<svg style="left:2036px;top:70px" width="26" height="26" viewBox="0 0 26 26"><rect width="26" height="26" fill="#8d8d8d"/><rect x="0.5" y="0.5" width="25" height="25" fill="none" stroke="#868686"/><path d="M5 13 H21" stroke="#767676" stroke-width="4"/></svg>
<svg style="left:2075px;top:70px" width="26" height="26" viewBox="0 0 26 26"><rect x="0.5" y="0.5" width="25" height="25" fill="#ffffff" stroke="#6486b0"/><rect x="2" y="2" width="22" height="22" fill="url(#gBtn)"/><path d="M6 5.6 L13 20.2 L20 5.6" fill="none" stroke="#5679a4" stroke-width="3.2" stroke-linecap="round" stroke-linejoin="round"/><path d="M7.6 8.4 H18.4" stroke="#5679a4" stroke-width="2.8"/></svg>
<div style="left:1px;top:107px;width:1206px;height:43px;background:#9db6d4;"></div>
<div style="left:1px;top:150px;width:1206px;height:1px;background:#7f93ac;"></div>
<div style="left:1219px;top:107px;width:1206px;height:43px;background:#c1cddb;"></div>
<div style="left:1219px;top:150px;width:1206px;height:1px;background:#98a2ae;"></div>
<span class="t" id="t12" style="left:5.70px;top:114.82px;font-size:26.5px;color:#5d5a57;transform:scaleX(0.9816);">C:\Users\</span>
<span class="t" id="t13" style="left:112.80px;top:114.82px;font-size:26.5px;color:#000;letter-spacing:-0.010px;">shaun\OneDrive\Desktop\My_Files\Codes\Toxic_Comment_Gradio\source\*.*</span>
<span class="t" id="t14" style="left:1224.10px;top:114.82px;font-size:26.5px;color:#000;letter-spacing:1.320px;">/home/ubuntu/</span>
<div style="left:0px;top:0px;width:1px;height:1238px;background:#767676;"></div>
<div style="left:1px;top:151px;width:1206px;height:1087px;background:#202020;"></div>
<div style="left:340px;top:152px;width:1px;height:47px;background:#6a6a6a;"></div>
<div style="left:339px;top:199px;width:1px;height:1039px;background:#3a3a3a;"></div>
<div style="left:498px;top:152px;width:1px;height:47px;background:#6a6a6a;"></div>
<div style="left:497px;top:199px;width:1px;height:1039px;background:#3a3a3a;"></div>
<div style="left:768px;top:152px;width:1px;height:47px;background:#6a6a6a;"></div>
<div style="left:767px;top:199px;width:1px;height:1039px;background:#3a3a3a;"></div>
<div style="left:1106px;top:152px;width:1px;height:47px;background:#6a6a6a;"></div>
<div style="left:1105px;top:199px;width:1px;height:1039px;background:#3a3a3a;"></div>
<span class="t" id="t15" style="left:8.70px;top:161.82px;font-size:26.5px;color:#fff;letter-spacing:0.344px;">Name</span>
<span class="t" id="t16" style="left:446.10px;top:161.82px;font-size:26.5px;color:#fff;transform:scaleX(0.9185);">Size</span>
<span class="t" id="t17" style="left:505.10px;top:161.82px;font-size:26.5px;color:#fff;letter-spacing:-0.423px;">Type</span>
<span class="t" id="t18" style="left:775.10px;top:161.82px;font-size:26.5px;color:#fff;letter-spacing:0.010px;">Changed</span>
<svg style="left:164.5px;top:155px" width="16" height="11" viewBox="0 0 16 11"><path d="M1.2 9 L8 2.2 L14.8 9" fill="none" stroke="#b0b0b0" stroke-width="1.1"/></svg>
<div style="left:1219px;top:151px;width:1206px;height:1087px;background:#202020;"></div>
<div style="left:1558px;top:152px;width:1px;height:47px;background:#6a6a6a;"></div>
<div style="left:1557px;top:199px;width:1px;height:1039px;background:#3a3a3a;"></div>
<div style="left:1716px;top:152px;width:1px;height:47px;background:#6a6a6a;"></div>
<div style="left:1715px;top:199px;width:1px;height:1039px;background:#3a3a3a;"></div>
<div style="left:2054px;top:152px;width:1px;height:47px;background:#6a6a6a;"></div>
<div style="left:2053px;top:199px;width:1px;height:1039px;background:#3a3a3a;"></div>
<div style="left:2232px;top:152px;width:1px;height:47px;background:#6a6a6a;"></div>
<div style="left:2231px;top:199px;width:1px;height:1039px;background:#3a3a3a;"></div>
<div style="left:2372px;top:152px;width:1px;height:47px;background:#6a6a6a;"></div>
<div style="left:2371px;top:199px;width:1px;height:1039px;background:#3a3a3a;"></div>
<span class="t" id="t19" style="left:1226.70px;top:161.82px;font-size:26.5px;color:#fff;letter-spacing:0.344px;">Name</span>
<span class="t" id="t20" style="left:1664.10px;top:161.82px;font-size:26.5px;color:#fff;transform:scaleX(0.9185);">Size</span>
<span class="t" id="t21" style="left:1722.50px;top:161.82px;font-size:26.5px;color:#fff;letter-spacing:0.097px;">Changed</span>
<span class="t" id="t22" style="left:2059.50px;top:161.82px;font-size:26.5px;color:#fff;letter-spacing:0.163px;">Rights</span>
<span class="t" id="t23" style="left:2238.70px;top:161.82px;font-size:26.5px;color:#fff;letter-spacing:0.182px;">Owner</span>
<svg style="left:1382.5px;top:155px" width="16" height="11" viewBox="0 0 16 11"><path d="M1.2 9 L8 2.2 L14.8 9" fill="none" stroke="#b0b0b0" stroke-width="1.1"/></svg>
<div style="left:1206px;top:151px;width:1px;height:1087px;background:#828790;"></div>
<div style="left:1207px;top:150px;width:12px;height:1088px;background:#2b2b2b;"></div>
<div style="left:1219px;top:151px;width:1px;height:1087px;background:#828790;"></div>
<div style="left:1px;top:151px;width:1px;height:1087px;background:#828790;"></div>
<div style="left:3px;top:199px;width:1px;height:1039px;background:#555555;"></div>
<div style="left:4px;top:199px;width:1px;height:1039px;background:#1c3a63;"></div>
<div style="left:1221px;top:199px;width:1px;height:1039px;background:#5c5c5c;"></div>
<div style="left:1222px;top:199px;width:1px;height:1039px;background:#1c3a63;"></div>
<svg style="left:13px;top:205px" width="20" height="31" viewBox="0 0 20 31"><path d="M0 0 H19 V15 L20 16 V25.5 H5 Z" fill="url(#gVf)"/><path d="M0 0 L6.8 5.6 L6 30.5 L0 26 Z" fill="url(#gVfF)"/><path d="M5 12.5 V23 H19" fill="none" stroke="#42434f" stroke-width="2"/><path d="M1.2 16.5 L5 12 L8.8 16.5 Z" fill="#42434f" stroke="#42434f" stroke-width="0.8" stroke-linejoin="round"/></svg>
<span class="t" id="t24" style="left:44.10px;top:205.82px;font-size:26.5px;color:#fff;transform:scaleX(1.0189);">..</span>
<svg style="left:1231px;top:205px" width="20" height="31" viewBox="0 0 20 31"><path d="M0 0 H19 V15 L20 16 V25.5 H5 Z" fill="url(#gVf)"/><path d="M0 0 L6.8 5.6 L6 30.5 L0 26 Z" fill="url(#gVfF)"/><path d="M5 12.5 V23 H19" fill="none" stroke="#42434f" stroke-width="2"/><path d="M1.2 16.5 L5 12 L8.8 16.5 Z" fill="#42434f" stroke="#42434f" stroke-width="0.8" stroke-linejoin="round"/></svg>
<span class="t" id="t25" style="left:1262.10px;top:205.82px;font-size:26.5px;color:#fff;transform:scaleX(1.0189);">..</span>
<span class="t" id="t26" style="left:503.90px;top:205.82px;font-size:26.5px;color:#fff;letter-spacing:0.105px;">Parent directory</span>
<span class="t" id="t27" style="left:774.10px;top:205.82px;font-size:26.5px;color:#fff;letter-spacing:0.604px;">13-05-2021</span>
<span class="t" id="t28" style="left:931.10px;top:205.82px;font-size:26.5px;color:#fff;transform:scaleX(0.9793);">21:16:54</span>
<span class="t" id="t29" style="left:1722.50px;top:205.82px;font-size:26.5px;color:#fff;letter-spacing:0.444px;">23-05-2021</span>
<span class="t" id="t30" style="left:1871.10px;top:205.82px;font-size:26.5px;color:#fff;transform:scaleX(0.9939);">13:17:10</span>
<span class="t" id="t31" style="left:2059.50px;top:205.82px;font-size:26.5px;color:#fff;letter-spacing:0.444px;">rwxr-xr-x</span>
<span class="t" id="t32" style="left:2237.70px;top:205.82px;font-size:26.5px;color:#fff;letter-spacing:1.947px;">root</span>
<svg style="left:13px;top:244px" width="24" height="32" viewBox="0 0 24 32"><path d="M0 0 H18 L24 6 V32 H0 Z" fill="#ffffff"/><path d="M1.6 1.6 H17.4 L17.4 6.6 L22.4 6.6 V30.4 H1.6 Z" fill="#f6f7f9"/><path d="M18 0 V6 H24 Z" fill="#ebebeb"/><path d="M17.9 0.4 V6.1 H23.6" fill="none" stroke="#b4b4b4" stroke-width="0.9"/><path d="M23.5 6 V31.5 H0.5" fill="none" stroke="#c6c6c6" stroke-width="1"/><g fill="#4688a8"><path d="M11.6 8 C8.6 8 7.4 9.2 7.4 10.8 V12.7 H12 V13.3 H5.8 C4 13.4 3 14.8 3 17 C3 19.2 4 20.6 5.8 20.6 H7.4 V18.4 C7.4 16.8 8.6 15.6 10.2 15.6 H14 C15.4 15.6 16.4 14.6 16.4 13.2 V10.8 C16.4 9.2 15 8 11.6 8 Z"/><path d="M12.4 26 C15.4 26 16.6 24.8 16.6 23.2 V21.3 H12 V20.7 H18.2 C20 20.6 21 19.2 21 17 C21 14.8 20 13.4 18.2 13.4 H16.6 V15.6 C16.6 17.2 15.4 18.4 13.8 18.4 H10 C8.6 18.4 7.6 19.4 7.6 20.8 V23.2 C7.6 24.8 9 26 12.4 26 Z" fill="#3f7f9f"/></g><circle cx="9.6" cy="10.4" r="0.9" fill="#f6f7f9"/><circle cx="14.4" cy="23.6" r="0.9" fill="#f6f7f9"/></svg>
<span class="t" id="t33" style="left:45.10px;top:246.82px;font-size:26.5px;color:#fff;letter-spacing:0.369px;">config.py</span>
<span class="t" id="t34" style="left:437.30px;top:246.82px;font-size:26.5px;color:#fff;transform:scaleX(0.9455);">1 KB</span>
<svg style="left:1231px;top:244px" width="24" height="32" viewBox="0 0 24 32"><path d="M0 0 H18 L24 6 V32 H0 Z" fill="#ffffff"/><path d="M1.6 1.6 H17.4 L17.4 6.6 L22.4 6.6 V30.4 H1.6 Z" fill="#f6f7f9"/><path d="M18 0 V6 H24 Z" fill="#ebebeb"/><path d="M17.9 0.4 V6.1 H23.6" fill="none" stroke="#b4b4b4" stroke-width="0.9"/><path d="M23.5 6 V31.5 H0.5" fill="none" stroke="#c6c6c6" stroke-width="1"/><g fill="#4688a8"><path d="M11.6 8 C8.6 8 7.4 9.2 7.4 10.8 V12.7 H12 V13.3 H5.8 C4 13.4 3 14.8 3 17 C3 19.2 4 20.6 5.8 20.6 H7.4 V18.4 C7.4 16.8 8.6 15.6 10.2 15.6 H14 C15.4 15.6 16.4 14.6 16.4 13.2 V10.8 C16.4 9.2 15 8 11.6 8 Z"/><path d="M12.4 26 C15.4 26 16.6 24.8 16.6 23.2 V21.3 H12 V20.7 H18.2 C20 20.6 21 19.2 21 17 C21 14.8 20 13.4 18.2 13.4 H16.6 V15.6 C16.6 17.2 15.4 18.4 13.8 18.4 H10 C8.6 18.4 7.6 19.4 7.6 20.8 V23.2 C7.6 24.8 9 26 12.4 26 Z" fill="#3f7f9f"/></g><circle cx="9.6" cy="10.4" r="0.9" fill="#f6f7f9"/><circle cx="14.4" cy="23.6" r="0.9" fill="#f6f7f9"/></svg>
<span class="t" id="t35" style="left:1263.10px;top:246.82px;font-size:26.5px;color:#fff;letter-spacing:0.369px;">config.py</span>
<span class="t" id="t36" style="left:1655.30px;top:246.82px;font-size:26.5px;color:#fff;transform:scaleX(0.9455);">1 KB</span>
<span class="t" id="t37" style="left:503.90px;top:246.82px;font-size:26.5px;color:#fff;transform:scaleX(0.9766);">Python Source File</span>
<span class="t" id="t38" style="left:775.10px;top:246.82px;font-size:26.5px;color:#fff;letter-spacing:0.404px;">06-05-2021</span>
<span class="t" id="t39" style="left:931.10px;top:246.82px;font-size:26.5px;color:#fff;transform:scaleX(0.9882);">21:18:07</span>
<span class="t" id="t40" style="left:1722.50px;top:246.82px;font-size:26.5px;color:#fff;letter-spacing:0.444px;">06-05-2021</span>
<span class="t" id="t41" style="left:1872.10px;top:246.82px;font-size:26.5px;color:#fff;transform:scaleX(0.9939);">21:18:07</span>
<span class="t" id="t42" style="left:2059.50px;top:246.82px;font-size:26.5px;color:#fff;letter-spacing:1.531px;">rw-rw-r--</span>
<span class="t" id="t43" style="left:2237.70px;top:246.82px;font-size:26.5px;color:#fff;letter-spacing:1.091px;">ubuntu</span>
<svg style="left:13px;top:285px" width="24" height="32" viewBox="0 0 24 32"><path d="M0 0 H18 L24 6 V32 H0 Z" fill="#ffffff"/><path d="M1.6 1.6 H17.4 L17.4 6.6 L22.4 6.6 V30.4 H1.6 Z" fill="#f6f7f9"/><path d="M18 0 V6 H24 Z" fill="#ebebeb"/><path d="M17.9 0.4 V6.1 H23.6" fill="none" stroke="#b4b4b4" stroke-width="0.9"/><path d="M23.5 6 V31.5 H0.5" fill="none" stroke="#c6c6c6" stroke-width="1"/><g fill="#4688a8"><path d="M11.6 8 C8.6 8 7.4 9.2 7.4 10.8 V12.7 H12 V13.3 H5.8 C4 13.4 3 14.8 3 17 C3 19.2 4 20.6 5.8 20.6 H7.4 V18.4 C7.4 16.8 8.6 15.6 10.2 15.6 H14 C15.4 15.6 16.4 14.6 16.4 13.2 V10.8 C16.4 9.2 15 8 11.6 8 Z"/><path d="M12.4 26 C15.4 26 16.6 24.8 16.6 23.2 V21.3 H12 V20.7 H18.2 C20 20.6 21 19.2 21 17 C21 14.8 20 13.4 18.2 13.4 H16.6 V15.6 C16.6 17.2 15.4 18.4 13.8 18.4 H10 C8.6 18.4 7.6 19.4 7.6 20.8 V23.2 C7.6 24.8 9 26 12.4 26 Z" fill="#3f7f9f"/></g><circle cx="9.6" cy="10.4" r="0.9" fill="#f6f7f9"/><circle cx="14.4" cy="23.6" r="0.9" fill="#f6f7f9"/></svg>
<span class="t" id="t44" style="left:45.10px;top:287.82px;font-size:26.5px;color:#fff;letter-spacing:-0.135px;">data_cleaning.py</span>
<span class="t" id="t45" style="left:423.10px;top:287.82px;font-size:26.5px;color:#fff;transform:scaleX(0.9488);">12 KB</span>
<svg style="left:1231px;top:285px" width="24" height="32" viewBox="0 0 24 32"><path d="M0 0 H18 L24 6 V32 H0 Z" fill="#ffffff"/><path d="M1.6 1.6 H17.4 L17.4 6.6 L22.4 6.6 V30.4 H1.6 Z" fill="#f6f7f9"/><path d="M18 0 V6 H24 Z" fill="#ebebeb"/><path d="M17.9 0.4 V6.1 H23.6" fill="none" stroke="#b4b4b4" stroke-width="0.9"/><path d="M23.5 6 V31.5 H0.5" fill="none" stroke="#c6c6c6" stroke-width="1"/><g fill="#4688a8"><path d="M11.6 8 C8.6 8 7.4 9.2 7.4 10.8 V12.7 H12 V13.3 H5.8 C4 13.4 3 14.8 3 17 C3 19.2 4 20.6 5.8 20.6 H7.4 V18.4 C7.4 16.8 8.6 15.6 10.2 15.6 H14 C15.4 15.6 16.4 14.6 16.4 13.2 V10.8 C16.4 9.2 15 8 11.6 8 Z"/><path d="M12.4 26 C15.4 26 16.6 24.8 16.6 23.2 V21.3 H12 V20.7 H18.2 C20 20.6 21 19.2 21 17 C21 14.8 20 13.4 18.2 13.4 H16.6 V15.6 C16.6 17.2 15.4 18.4 13.8 18.4 H10 C8.6 18.4 7.6 19.4 7.6 20.8 V23.2 C7.6 24.8 9 26 12.4 26 Z" fill="#3f7f9f"/></g><circle cx="9.6" cy="10.4" r="0.9" fill="#f6f7f9"/><circle cx="14.4" cy="23.6" r="0.9" fill="#f6f7f9"/></svg>
<span class="t" id="t46" style="left:1263.10px;top:287.82px;font-size:26.5px;color:#fff;letter-spacing:-0.135px;">data_cleaning.py</span>
<span class="t" id="t47" style="left:1641.10px;top:287.82px;font-size:26.5px;color:#fff;transform:scaleX(0.9488);">12 KB</span>
<span class="t" id="t48" style="left:503.90px;top:287.82px;font-size:26.5px;color:#fff;transform:scaleX(0.9766);">Python Source File</span>
<span class="t" id="t49" style="left:775.10px;top:287.82px;font-size:26.5px;color:#fff;letter-spacing:0.404px;">06-05-2021</span>
<span class="t" id="t50" style="left:931.10px;top:287.82px;font-size:26.5px;color:#fff;transform:scaleX(0.9882);">23:04:58</span>
<span class="t" id="t51" style="left:1722.50px;top:287.82px;font-size:26.5px;color:#fff;letter-spacing:0.444px;">06-05-2021</span>
<span class="t" id="t52" style="left:1872.10px;top:287.82px;font-size:26.5px;color:#fff;transform:scaleX(0.9940);">23:04:58</span>
<span class="t" id="t53" style="left:2059.50px;top:287.82px;font-size:26.5px;color:#fff;letter-spacing:1.531px;">rw-rw-r--</span>
<span class="t" id="t54" style="left:2237.70px;top:287.82px;font-size:26.5px;color:#fff;letter-spacing:1.091px;">ubuntu</span>
<svg style="left:13px;top:326px" width="24" height="32" viewBox="0 0 24 32"><path d="M0 0 H18 L24 6 V32 H0 Z" fill="#ffffff"/><path d="M1.6 1.6 H17.4 L17.4 6.6 L22.4 6.6 V30.4 H1.6 Z" fill="#f6f7f9"/><path d="M18 0 V6 H24 Z" fill="#ebebeb"/><path d="M17.9 0.4 V6.1 H23.6" fill="none" stroke="#b4b4b4" stroke-width="0.9"/><path d="M23.5 6 V31.5 H0.5" fill="none" stroke="#c6c6c6" stroke-width="1"/><g fill="#4688a8"><path d="M11.6 8 C8.6 8 7.4 9.2 7.4 10.8 V12.7 H12 V13.3 H5.8 C4 13.4 3 14.8 3 17 C3 19.2 4 20.6 5.8 20.6 H7.4 V18.4 C7.4 16.8 8.6 15.6 10.2 15.6 H14 C15.4 15.6 16.4 14.6 16.4 13.2 V10.8 C16.4 9.2 15 8 11.6 8 Z"/><path d="M12.4 26 C15.4 26 16.6 24.8 16.6 23.2 V21.3 H12 V20.7 H18.2 C20 20.6 21 19.2 21 17 C21 14.8 20 13.4 18.2 13.4 H16.6 V15.6 C16.6 17.2 15.4 18.4 13.8 18.4 H10 C8.6 18.4 7.6 19.4 7.6 20.8 V23.2 C7.6 24.8 9 26 12.4 26 Z" fill="#3f7f9f"/></g><circle cx="9.6" cy="10.4" r="0.9" fill="#f6f7f9"/><circle cx="14.4" cy="23.6" r="0.9" fill="#f6f7f9"/></svg>
<span class="t" id="t55" style="left:45.10px;top:328.82px;font-size:26.5px;color:#fff;transform:scaleX(0.9876);">data_preprocessing.py</span>
<span class="t" id="t56" style="left:438.30px;top:328.82px;font-size:26.5px;color:#fff;transform:scaleX(0.9285);">5 KB</span>
<svg style="left:1231px;top:326px" width="24" height="32" viewBox="0 0 24 32"><path d="M0 0 H18 L24 6 V32 H0 Z" fill="#ffffff"/><path d="M1.6 1.6 H17.4 L17.4 6.6 L22.4 6.6 V30.4 H1.6 Z" fill="#f6f7f9"/><path d="M18 0 V6 H24 Z" fill="#ebebeb"/><path d="M17.9 0.4 V6.1 H23.6" fill="none" stroke="#b4b4b4" stroke-width="0.9"/><path d="M23.5 6 V31.5 H0.5" fill="none" stroke="#c6c6c6" stroke-width="1"/><g fill="#4688a8"><path d="M11.6 8 C8.6 8 7.4 9.2 7.4 10.8 V12.7 H12 V13.3 H5.8 C4 13.4 3 14.8 3 17 C3 19.2 4 20.6 5.8 20.6 H7.4 V18.4 C7.4 16.8 8.6 15.6 10.2 15.6 H14 C15.4 15.6 16.4 14.6 16.4 13.2 V10.8 C16.4 9.2 15 8 11.6 8 Z"/><path d="M12.4 26 C15.4 26 16.6 24.8 16.6 23.2 V21.3 H12 V20.7 H18.2 C20 20.6 21 19.2 21 17 C21 14.8 20 13.4 18.2 13.4 H16.6 V15.6 C16.6 17.2 15.4 18.4 13.8 18.4 H10 C8.6 18.4 7.6 19.4 7.6 20.8 V23.2 C7.6 24.8 9 26 12.4 26 Z" fill="#3f7f9f"/></g><circle cx="9.6" cy="10.4" r="0.9" fill="#f6f7f9"/><circle cx="14.4" cy="23.6" r="0.9" fill="#f6f7f9"/></svg>
<span class="t" id="t57" style="left:1263.10px;top:328.82px;font-size:26.5px;color:#fff;transform:scaleX(0.9876);">data_preprocessing.py</span>
<span class="t" id="t58" style="left:1656.30px;top:328.82px;font-size:26.5px;color:#fff;transform:scaleX(0.9285);">5 KB</span>
<span class="t" id="t59" style="left:503.90px;top:328.82px;font-size:26.5px;color:#fff;transform:scaleX(0.9766);">Python Source File</span>
<span class="t" id="t60" style="left:775.10px;top:328.82px;font-size:26.5px;color:#fff;letter-spacing:0.404px;">06-05-2021</span>
<span class="t" id="t61" style="left:931.10px;top:328.82px;font-size:26.5px;color:#fff;transform:scaleX(0.9882);">23:04:56</span>
<span class="t" id="t62" style="left:1722.50px;top:328.82px;font-size:26.5px;color:#fff;letter-spacing:0.444px;">06-05-2021</span>
<span class="t" id="t63" style="left:1872.10px;top:328.82px;font-size:26.5px;color:#fff;transform:scaleX(0.9940);">23:04:56</span>
<span class="t" id="t64" style="left:2059.50px;top:328.82px;font-size:26.5px;color:#fff;letter-spacing:1.531px;">rw-rw-r--</span>
<span class="t" id="t65" style="left:2237.70px;top:328.82px;font-size:26.5px;color:#fff;letter-spacing:1.091px;">ubuntu</span>
<svg style="left:13px;top:367px" width="24" height="32" viewBox="0 0 24 32"><path d="M0 0 H18 L24 6 V32 H0 Z" fill="#ffffff"/><path d="M1.6 1.6 H17.4 L17.4 6.6 L22.4 6.6 V30.4 H1.6 Z" fill="#f6f7f9"/><path d="M18 0 V6 H24 Z" fill="#ebebeb"/><path d="M17.9 0.4 V6.1 H23.6" fill="none" stroke="#b4b4b4" stroke-width="0.9"/><path d="M23.5 6 V31.5 H0.5" fill="none" stroke="#c6c6c6" stroke-width="1"/><g fill="#4688a8"><path d="M11.6 8 C8.6 8 7.4 9.2 7.4 10.8 V12.7 H12 V13.3 H5.8 C4 13.4 3 14.8 3 17 C3 19.2 4 20.6 5.8 20.6 H7.4 V18.4 C7.4 16.8 8.6 15.6 10.2 15.6 H14 C15.4 15.6 16.4 14.6 16.4 13.2 V10.8 C16.4 9.2 15 8 11.6 8 Z"/><path d="M12.4 26 C15.4 26 16.6 24.8 16.6 23.2 V21.3 H12 V20.7 H18.2 C20 20.6 21 19.2 21 17 C21 14.8 20 13.4 18.2 13.4 H16.6 V15.6 C16.6 17.2 15.4 18.4 13.8 18.4 H10 C8.6 18.4 7.6 19.4 7.6 20.8 V23.2 C7.6 24.8 9 26 12.4 26 Z" fill="#3f7f9f"/></g><circle cx="9.6" cy="10.4" r="0.9" fill="#f6f7f9"/><circle cx="14.4" cy="23.6" r="0.9" fill="#f6f7f9"/></svg>
<span class="t" id="t66" style="left:44.10px;top:369.82px;font-size:26.5px;color:#fff;letter-spacing:0.316px;">model_training.py</span>
<span class="t" id="t67" style="left:437.10px;top:369.82px;font-size:26.5px;color:#fff;transform:scaleX(0.9337);">4 KB</span>
<svg style="left:1231px;top:367px" width="24" height="32" viewBox="0 0 24 32"><path d="M0 0 H18 L24 6 V32 H0 Z" fill="#ffffff"/><path d="M1.6 1.6 H17.4 L17.4 6.6 L22.4 6.6 V30.4 H1.6 Z" fill="#f6f7f9"/><path d="M18 0 V6 H24 Z" fill="#ebebeb"/><path d="M17.9 0.4 V6.1 H23.6" fill="none" stroke="#b4b4b4" stroke-width="0.9"/><path d="M23.5 6 V31.5 H0.5" fill="none" stroke="#c6c6c6" stroke-width="1"/><g fill="#4688a8"><path d="M11.6 8 C8.6 8 7.4 9.2 7.4 10.8 V12.7 H12 V13.3 H5.8 C4 13.4 3 14.8 3 17 C3 19.2 4 20.6 5.8 20.6 H7.4 V18.4 C7.4 16.8 8.6 15.6 10.2 15.6 H14 C15.4 15.6 16.4 14.6 16.4 13.2 V10.8 C16.4 9.2 15 8 11.6 8 Z"/><path d="M12.4 26 C15.4 26 16.6 24.8 16.6 23.2 V21.3 H12 V20.7 H18.2 C20 20.6 21 19.2 21 17 C21 14.8 20 13.4 18.2 13.4 H16.6 V15.6 C16.6 17.2 15.4 18.4 13.8 18.4 H10 C8.6 18.4 7.6 19.4 7.6 20.8 V23.2 C7.6 24.8 9 26 12.4 26 Z" fill="#3f7f9f"/></g><circle cx="9.6" cy="10.4" r="0.9" fill="#f6f7f9"/><circle cx="14.4" cy="23.6" r="0.9" fill="#f6f7f9"/></svg>
<span class="t" id="t68" style="left:1262.10px;top:369.82px;font-size:26.5px;color:#fff;letter-spacing:0.316px;">model_training.py</span>
<span class="t" id="t69" style="left:1655.10px;top:369.82px;font-size:26.5px;color:#fff;transform:scaleX(0.9337);">4 KB</span>
<span class="t" id="t70" style="left:503.90px;top:369.82px;font-size:26.5px;color:#fff;transform:scaleX(0.9766);">Python Source File</span>
<span class="t" id="t71" style="left:775.10px;top:369.82px;font-size:26.5px;color:#fff;letter-spacing:0.404px;">06-05-2021</span>
<span class="t" id="t72" style="left:931.10px;top:369.82px;font-size:26.5px;color:#fff;transform:scaleX(0.9793);">23:07:04</span>
<span class="t" id="t73" style="left:1722.50px;top:369.82px;font-size:26.5px;color:#fff;letter-spacing:0.444px;">06-05-2021</span>
<span class="t" id="t74" style="left:1872.10px;top:369.82px;font-size:26.5px;color:#fff;transform:scaleX(0.9849);">23:07:04</span>
<span class="t" id="t75" style="left:2059.50px;top:369.82px;font-size:26.5px;color:#fff;letter-spacing:1.531px;">rw-rw-r--</span>
<span class="t" id="t76" style="left:2237.70px;top:369.82px;font-size:26.5px;color:#fff;letter-spacing:1.091px;">ubuntu</span>
<div style="left:44px;top:364px;width:216px;height:37px;border:1px dotted #e8e8e8;background:none"></div>
</div>
</body></html>
